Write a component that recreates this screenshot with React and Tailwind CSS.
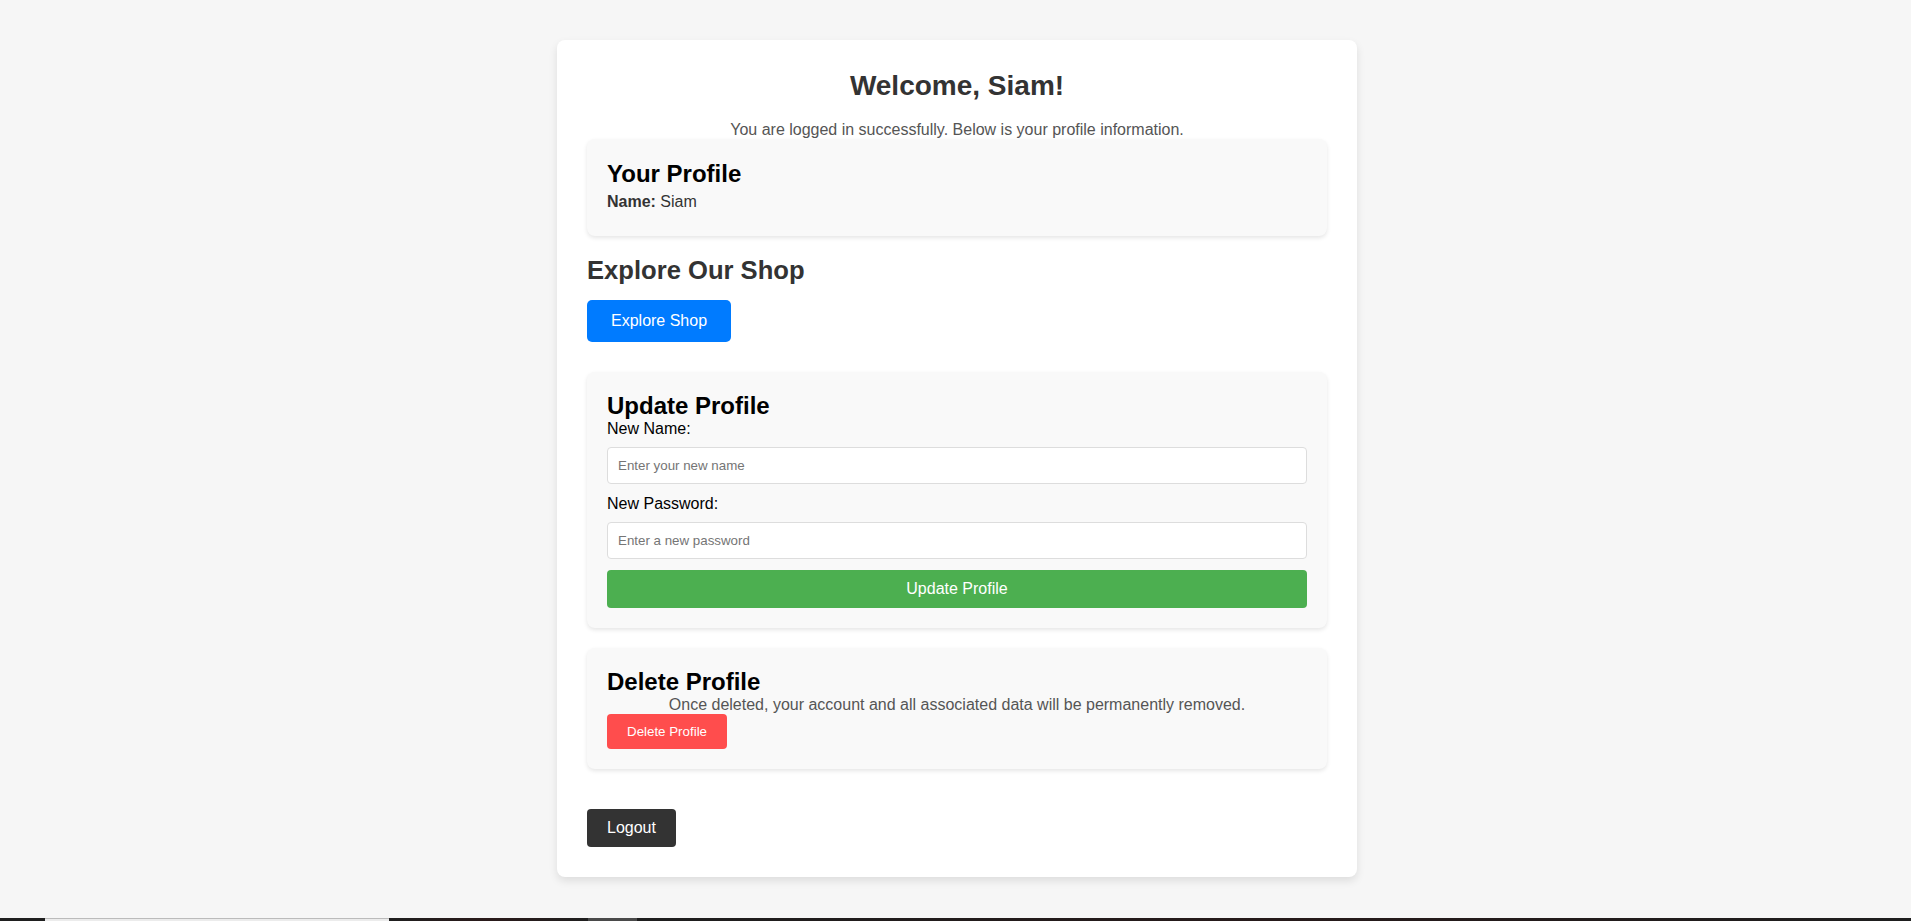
import React from "react";

const Dashboard = () => {
  return (
    <div className="h-[921px] flex flex-col bg-[#f6f6f6] font-['Liberation_Sans',Arial,sans-serif] overflow-hidden">
      <div className="flex-1 pl-[3px]">
        {/* Main card */}
        <div className="mx-auto mt-[40px] w-[800px] rounded-[8px] bg-white p-[30px] shadow-[0_4px_8px_rgba(0,0,0,0.1)]">
          <h1 className="text-center text-[28px] leading-[32px] font-bold text-[#333]">
            Welcome, Siam!
          </h1>
          <p className="mt-[19px] text-center text-[16px] leading-[18px] text-[#555]">
            You are logged in successfully. Below is your profile information.
          </p>

          {/* Profile */}
          <div className="relative rounded-[8px] bg-[#f9f9f9] px-[20px] pt-[21px] pb-[25px] shadow-[0_2px_4px_rgba(0,0,0,0.1)]">
            <h2 className="text-[24px] leading-[28px] font-bold text-black">
              Your Profile
            </h2>
            <p className="mt-[5px] text-[16px] leading-[18px] text-[#333]">
              <strong className="font-bold">Name:</strong> Siam
            </p>
          </div>

          {/* Shop */}
          <h2 className="mt-[19px] text-[25.6px] leading-[30px] font-bold text-[#333]">
            Explore Our Shop
          </h2>
          <button className="mt-[15px] flex h-[42px] items-center rounded-[5px] bg-[#007bff] px-[24px] text-[16px] text-white">
            Explore Shop
          </button>

          {/* Update */}
          <div className="mt-[30px] rounded-[8px] bg-[#f9f9f9] p-[20px] shadow-[0_2px_4px_rgba(0,0,0,0.1)]">
            <h2 className="text-[24px] leading-[28px] font-bold text-black">
              Update Profile
            </h2>
            <label className="block text-[16px] leading-[18px] text-black">
              New Name:
            </label>
            <input
              type="text"
              placeholder="Enter your new name"
              className="mt-[9px] block h-[37px] w-full rounded-[4px] border border-[#ddd] bg-white px-[10px] text-[13.333px] placeholder:text-[#757575] outline-none"
            />
            <label className="mt-[11px] block text-[16px] leading-[18px] text-black">
              New Password:
            </label>
            <input
              type="password"
              placeholder="Enter a new password"
              className="mt-[9px] block h-[37px] w-full rounded-[4px] border border-[#ddd] bg-white px-[10px] text-[13.333px] placeholder:text-[#757575] outline-none"
            />
            <button className="mt-[11px] flex h-[38px] w-full items-center justify-center rounded-[4px] bg-[#4caf50] text-[16px] text-white">
              Update Profile
            </button>
          </div>

          {/* Delete */}
          <div className="mt-[20px] rounded-[8px] bg-[#f9f9f9] p-[20px] shadow-[0_2px_4px_rgba(0,0,0,0.1)]">
            <h2 className="text-[24px] leading-[28px] font-bold text-black">
              Delete Profile
            </h2>
            <p className="text-center text-[16px] leading-[18px] text-[#555]">
              Once deleted, your account and all associated data will be permanently removed.
            </p>
            <button className="flex h-[35px] items-center rounded-[4px] bg-[#ff4d4d] px-[20px] text-[13.333px] text-white">
              Delete Profile
            </button>
          </div>

          <button className="mt-[40px] flex h-[38px] items-center rounded-[4px] bg-[#333] px-[20px] text-[16px] text-white">
            Logout
          </button>
        </div>
      </div>

      {/* bottom strip */}
      <div className="flex h-[3px]">
        <div className="w-[45px] bg-[#1f1f1f]" />
        <div className="w-[344px] border-t border-[#bbb] bg-[#ececec]" />
        <div className="w-[199px] bg-gradient-to-r from-[#1f1f1f] via-[#2a1a1a] to-[#1f1f1f]" />
        <div className="w-[49px] bg-[#4a4a4a]" />
        <div className="flex-1 bg-gradient-to-r from-[#1e1e1e] via-[#261a1a] to-[#1e1e1e]" />
      </div>
    </div>
  );
};

export default Dashboard;
